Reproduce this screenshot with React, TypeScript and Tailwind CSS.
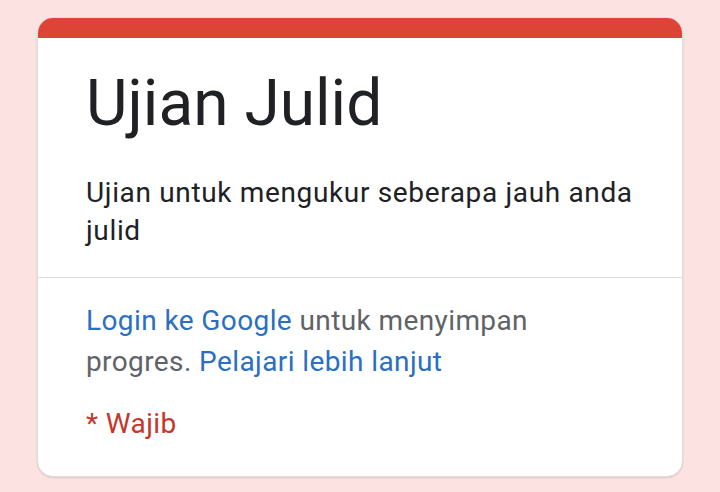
import React from "react";

const App: React.FC = () => {
  return (
    <div
      className="min-h-screen w-full bg-[#fce3e2] px-[37px] pt-[17px]"
      style={{ fontFamily: "Roboto, 'Noto Sans', sans-serif" }}
    >
      <div className="overflow-hidden rounded-[16px] border border-[#e0dada] bg-white shadow-[0_1px_2px_rgba(0,0,0,0.12)]">
        <div className="h-[20px] bg-[#db4437]"></div>
        <div className="border-b border-[#dadce0] px-[48px] pt-[27px] pb-[27px]">
          <h1 className="text-[64px] leading-[77px] font-normal text-[#202124]">
            Ujian Julid
          </h1>
          <p className="mt-[32px] text-[28px] leading-[38px] tracking-[0.65px] text-[#202124]">
            Ujian untuk mengukur seberapa jauh anda julid
          </p>
        </div>
        <div className="px-[48px] pt-[22px] pb-[32px]">
          <p className="text-[28px] leading-[41px] tracking-[0.4px] text-[#5f6368]">
            <a className="text-[#2a6fc1]">Login ke Google</a> untuk menyimpan
            progres. <a className="text-[#2a6fc1]">Pelajari lebih lanjut</a>
          </p>
          <p className="mt-[21px] text-[28px] leading-[41px] tracking-[0.4px] text-[#c5362b]">
            * Wajib
          </p>
        </div>
      </div>
    </div>
  );
};

export default App;
